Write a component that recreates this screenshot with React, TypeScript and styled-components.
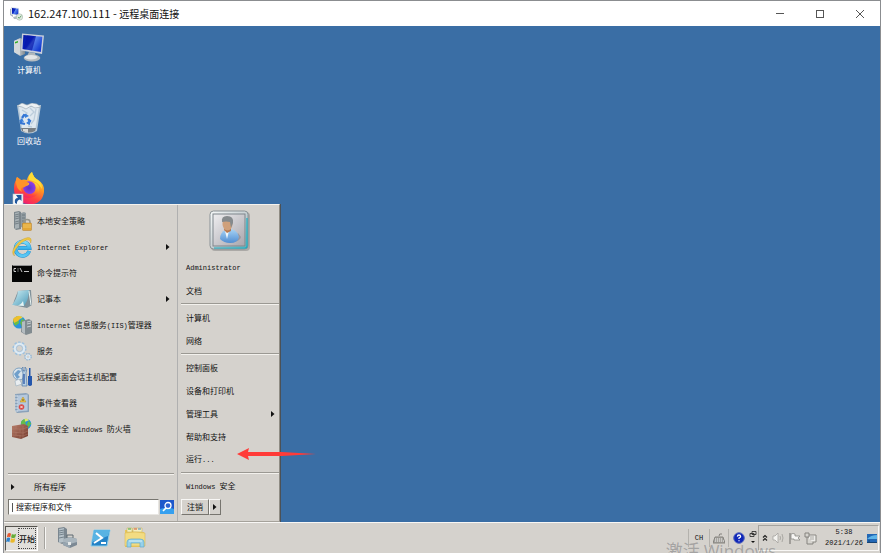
import React from "react";
import styled, { createGlobalStyle } from "styled-components";

const GlobalStyle = createGlobalStyle`
  * { box-sizing: border-box; }
  html, body { margin: 0; padding: 0; background: #fff; }
  button, input { font: inherit; color: inherit; margin: 0; }
  button { background: none; border: 0; padding: 0; text-align: left; }
`;

const face = "#d5d2cd";
const cjk = '"Noto Sans CJK SC", sans-serif';

/* ---------- layout ---------- */

const Page = styled.div`
  min-height: 100vh;
  padding: 0 3px 4px;
  display: flex;
  flex-direction: column;
  font-family: ${cjk};
  font-size: 8px;
  line-height: 12px;
  color: #111;
`;

const RemoteWindow = styled.main`
  position: relative;
  flex: 1;
  display: flex;
  flex-direction: column;
  overflow: hidden;
  border: 1px solid #8b8d90;
  border-bottom: 0;
`;

const TitleBar = styled.header`
  height: 25px;
  flex: none;
  display: flex;
  align-items: center;
  padding-left: 6px;
  background: #fff;
  color: #111;
`;

const Title = styled.h1`
  flex: 1;
  margin: 0 0 0 5px;
  font-size: 10px;
  font-weight: 400;
  line-height: 16px;
`;

const TitleAddress = styled.span`
  font-size: 11px;
`;

const CaptionButton = styled.button`
  width: 40px;
  height: 24px;
  display: flex;
  align-items: center;
  justify-content: center;
`;

const Desktop = styled.section`
  position: relative;
  flex: 1;
  padding-top: 6px;
  background: #3a6ea5;
`;

const DesktopIcons = styled.div`
  display: flex;
  flex-direction: column;
  align-items: flex-start;
`;

const DesktopItem = styled.button`
  width: 50px;
  height: 71px;
  display: flex;
  flex-direction: column;
  align-items: center;
  color: #fff;
`;

const StartMenu = styled.nav`
  position: absolute;
  left: 0;
  bottom: 0;
  width: 276px;
  display: flex;
  background: ${face};
  border: 1px solid #f4f2ee;
  border-left-color: #d5d2cd;
  border-right-color: #8f8c84;
  border-bottom-color: #a5a29b;
  box-shadow: 1px 0 0 #4b5157;
`;

const ProgramPane = styled.div`
  width: 173px;
  display: flex;
  flex-direction: column;
  padding: 3px 3px 6px 3px;
  border-right: 1px solid #b0b0b0;
`;

const ProgramItem = styled.button`
  height: 26px;
  display: flex;
  align-items: center;
  gap: 5px;
  padding: 0 4px 0 4px;
`;

const ItemText = styled.span`
  flex: 1;
  white-space: nowrap;
`;

const Spacer = styled.div`
  flex: 1;
`;

const Separator = styled.hr`
  width: 100%;
  height: 2px;
  margin: 0;
  border: 0;
  border-top: 1px solid #9b9993;
  border-bottom: 1px solid #f3f1ed;
`;

const AllPrograms = styled.button`
  height: 24px;
  display: flex;
  align-items: center;
  gap: 19px;
  padding-left: 3px;
`;

const SearchForm = styled.form`
  display: flex;
  gap: 1px;
`;

const SearchField = styled.label`
  flex: 1;
  display: flex;
  align-items: center;
  gap: 3px;
  height: 16px;
  padding-left: 3px;
  background: #fff;
  border: 1px solid #77756f;
  border-right-color: #e8e6e2;
  border-bottom-color: #e8e6e2;
`;

const Caret = styled.span`
  width: 1px;
  height: 9px;
  background: #555;
`;

const SearchInput = styled.input`
  flex: 1;
  min-width: 0;
  height: 12px;
  padding: 0;
  border: 0;
  outline: 0;
  background: none;
  &::placeholder { color: #111; opacity: 1; }
`;

const SearchButton = styled.button`
  display: flex;
  align-items: center;
`;

const PlacesPane = styled.div`
  flex: 1;
  display: flex;
  flex-direction: column;
  padding: 5px 0 6px 3px;
`;

const Avatar = styled.div`
  display: flex;
  justify-content: center;
  padding-bottom: 4px;
`;

const PlaceItem = styled.button`
  height: 23px;
  display: flex;
  align-items: center;
  padding: 0 4px 0 5px;
`;

const PlaceSeparator = styled(Separator)`
  margin: 1px 0;
`;

const LogoffRow = styled.div`
  display: flex;
  padding-top: 1px;
  margin-top: auto;
`;

const RaisedButton = styled.button<{ $wide?: boolean }>`
  width: ${(p) => (p.$wide ? "28px" : "12px")};
  height: 16px;
  display: flex;
  align-items: center;
  justify-content: center;
  border: 1px solid #f8f7f5;
  border-right-color: #77756f;
  border-bottom-color: #77756f;
`;

const Pointer = styled.svg`
  position: absolute;
  left: 233px;
  bottom: 61px;
`;

const Taskbar = styled.footer`
  height: 31px;
  flex: none;
  display: flex;
  align-items: center;
  background: ${face};
  border-top: 1px solid #f8f7f5;
  padding: 0 1px;
`;

const StartButton = styled.button`
  width: 33px;
  height: 25px;
  display: flex;
  align-items: center;
  border: 1px solid #55534e;
  border-right-color: #fff;
  border-bottom-color: #fff;
  background: #e1dfdb;
  font-weight: 500;
`;

const StartLabel = styled.span`
  flex: 1;
  margin: 1px;
  border: 1px dotted #444;
  line-height: 19px;
  text-align: center;
  white-space: nowrap;
`;

const QuickLaunch = styled.div`
  display: flex;
  gap: 12px;
  margin-left: 6px;
  padding-left: 11px;
  border-left: 1px solid #a5a39e;
  box-shadow: inset 1px 0 0 #f8f7f5;
`;

const LanguageBar = styled.div`
  height: 25px;
  display: flex;
  align-items: center;
  margin-left: auto;
`;

const LanguageButton = styled.button<{ $width: number }>`
  width: ${(p) => p.$width}px;
  height: 18px;
  display: flex;
  align-items: center;
  justify-content: center;
  border-left: 1px solid #b4b2ad;
`;

const BarOptions = styled.button`
  width: 10px;
  display: flex;
  justify-content: center;
`;

const Tray = styled.div`
  height: 26px;
  display: flex;
  align-items: center;
  gap: 3px;
  padding: 0 1px 0 3px;
  border: 1px solid #a5a39e;
  border-right-color: #f8f7f5;
  border-bottom-color: #f8f7f5;
`;

const TrayButton = styled.button`
  display: flex;
`;

const Clock = styled.time`
  width: 40px;
  margin-left: 4px;
  font: 7px/11px "Liberation Mono", monospace;
  text-align: center;
  white-space: nowrap;
`;

const ClockLine = styled.span`
  display: block;
`;

const Latin = styled.span`
  font-family: "Liberation Mono", monospace;
  font-size: 7px;
  white-space: pre;
`;

const Watermark = styled.div`
  position: absolute;
  right: 104px;
  bottom: -9px;
  font: 17px/22px ${cjk};
  color: rgba(110, 110, 115, 0.48);
  white-space: nowrap;
  pointer-events: none;
`;

const WatermarkLatin = styled.span`
  font: 17px/22px "Open Sans", sans-serif;
`;

/* ---------- text and icons ---------- */

function Label({ text }: { text: string }) {
  return (
    <>
      {text.split(/([\x20-\x7e]+)/).filter(Boolean).map((part, i) =>
        /[\x20-\x7e]/.test(part) ? <Latin key={i}>{part}</Latin> : <React.Fragment key={i}>{part}</React.Fragment>
      )}
    </>
  );
}

const ArrowRight = () => (
  <svg width="4" height="6" viewBox="0 0 4 6"><path d="M0 0L3.5 3L0 6Z" fill="#111" /></svg>
);

const Hidden = styled.svg`
  position: absolute;
`;

const Gradients = () => (
  <Hidden width="0" height="0" aria-hidden="true">
    <defs>
      <linearGradient id="screen" x2="1" y2=".6"><stop offset="0" stopColor="#06159b" /><stop offset=".45" stopColor="#0b2bcc" /><stop offset=".55" stopColor="#5a86ec" /><stop offset="1" stopColor="#143bd1" /></linearGradient>
      <linearGradient id="metal"><stop offset="0" stopColor="#f5f7f8" /><stop offset=".5" stopColor="#b8bfc4" /><stop offset="1" stopColor="#7e878e" /></linearGradient>
      <linearGradient id="ie" x2="0" y2="1"><stop offset="0" stopColor="#7ddcfb" /><stop offset=".5" stopColor="#35b0ec" /><stop offset="1" stopColor="#5cc8f4" /></linearGradient>
      <linearGradient id="note" x2="1" y2="1"><stop offset="0" stopColor="#d1f0f5" /><stop offset="1" stopColor="#4c9ab9" /></linearGradient>
      <linearGradient id="fox" x1=".8" y1="0" x2=".3" y2="1"><stop offset="0" stopColor="#fff04b" /><stop offset=".4" stopColor="#ff9b22" /><stop offset=".72" stopColor="#ff443e" /><stop offset="1" stopColor="#ed1878" /></linearGradient>
      <linearGradient id="frame" x2="1" y2="1"><stop offset="0" stopColor="#f7fafa" /><stop offset=".5" stopColor="#c9d1d4" /><stop offset="1" stopColor="#58b9c6" /></linearGradient>
      <linearGradient id="photo" x2="1" y2="1"><stop offset="0" stopColor="#eeeef0" /><stop offset="1" stopColor="#a8a5ac" /></linearGradient>
      <linearGradient id="blue" x2="0" y2="1"><stop offset="0" stopColor="#a8d4f5" /><stop offset="1" stopColor="#508dd2" /></linearGradient>
      <linearGradient id="brick" x2="1" y2="1"><stop offset="0" stopColor="#b77d69" /><stop offset="1" stopColor="#743a2d" /></linearGradient>
      <radialGradient id="violet"><stop offset="0" stopColor="#5a35c8" /><stop offset="1" stopColor="#9440e8" /></radialGradient>
    </defs>
  </Hidden>
);

const RemoteIcon = () => (
  <svg width="13" height="14" viewBox="0 0 13 14">
    <path d="M0 2L3 1V10L0 8Z" fill="#aeb7c0" />
    <path d="M1 0L9 1V9L1 7.5Z" fill="#dde3ea" /><path d="M2 1L8.3 1.8V8L2 6.8Z" fill="url(#screen)" />
    <path d="M3 10L7 9L8 12L4 12Z" fill="#aeb8c0" />
    <circle cx="9.5" cy="10" r="3.2" fill="#dde8de" stroke="#a9b8ac" strokeWidth=".6" />
    <path d="M8 10L9.2 11.3L11.3 8.7" fill="none" stroke="#67a36d" />
  </svg>
);

const ComputerIcon = () => (
  <svg width="32" height="32" viewBox="0 0 32 32">
    <path d="M1 9L7 6L12 8V22L7 24L1 20Z" fill="url(#metal)" />
    <path d="M1 9L7 7V23L1 20Z" fill="#d4d8da" /><path d="M2 10L5 9V10.5L2 11.5Z" fill="#32af25" />
    <path d="M16 20L22 21L23 25L14 24Z" fill="#aeb5ba" />
    <ellipse cx="19" cy="26" rx="8.3" ry="3.5" fill="#b6bcc0" /><ellipse cx="18" cy="25.3" rx="6.5" ry="2.2" fill="#e3e5e7" />
    <path d="M9 1.5L31 3.5L29 22L8 18.5Z" fill="#c9cedb" />
    <path d="M10.4 3L29.4 4.8L27.8 20L9.5 17Z" fill="url(#screen)" />
    <path d="M14 3.5L23 4.2L19 18.5L10 17Z" fill="#0712a3" opacity=".65" />
  </svg>
);

const RecycleIcon = () => (
  <svg width="32" height="32" viewBox="0 0 32 32">
    <path d="M4 2L28 2L24 28Q16 33 8 28Z" fill="#b6c8d7" />
    <path d="M6 4L26 4L22.5 25L9 25Z" fill="#dfe8ef" />
    <path d="M8 25L23 25L22 28Q16 31 9 28Z" fill="#787e83" />
    <path d="M10 26H15V30L10 28Z" fill="#d9dad7" />
    <path d="M4 3L9 0L14 2L19 0L24 1L28 4L22 5L18 3L13 6L9 4Z" fill="#edf1f3" stroke="#93a3af" strokeWidth=".6" />
    <path d="M9 7L14 10L12 14M17 5L21 9L17 13M23 6L21 17L18 21M15 23L19 24" fill="none" stroke="#bccddb" strokeWidth="1.3" />
    <path d="M9 15L11 12L14 13M15 16L17 18L15 21M12 21L8 20L8 17" fill="none" stroke="#3475d4" strokeWidth="2.3" />
    <path d="M12 10.5L16 13L12 15ZM17 17V22L13 20ZM6 18L9 15L11 19Z" fill="#397fda" />
  </svg>
);

const FirefoxIcon = () => (
  <svg width="32" height="32" viewBox="0 0 32 32" overflow="visible">
    <path d="M19-2Q20 3 25 6Q32 10 31 18C30 27 23 31 16 30C7 30 1 24 1 15Q1 9 3 6L4 3L8 6Q11 5 14 6Q15 1 19-2Z" fill="url(#fox)" />
    <circle cx="16" cy="14" r="6.7" fill="url(#violet)" />
    <path d="M3 7Q8 6 12 9L16 9Q17 11 13 12L10 14Q11 19 16 20Q22 20 23 14Q23 10 20 8Q28 10 26 19Q20 26 11 23Q4 19 3 7Z" fill="url(#fox)" />
    <path d="M3 5L4 3L8 6Q12 6 16 9Q14 12 10 13Q7 14 9 18Q3 16 3 5Z" fill="#ff932a" />
    <path d="M19-2Q20 3 25 6Q29 9 29 15Q25 7 16 6Q15 1 19-2Z" fill="#ffdc35" />
    <rect y="20" width="10" height="11" fill="#f6f8fa" stroke="#bcbec2" strokeWidth=".6" />
    <path d="M2 29Q1 24 5 24L3 21H8.5V27L7 25.5Q3.5 26 4 30Z" fill="#21579d" />
  </svg>
);

const Server = () => (
  <>
    <path d="M2 1L7 0L9 1V18L4 19L2 17Z" fill="#7c868c" /><path d="M3 2L7 1V17L3 18Z" fill="#a7b0b4" />
    <path d="M3 4L7 3M3 6L7 5M3 8L7 7M3 11L7 10M3 13L7 12" stroke="#68747a" strokeWidth=".8" />
    <path d="M9 2L12 1L14 2V18L9 16Z" fill="#929ca1" /><path d="M10 4H13M10 7H13M10 10H13M10 13H13" stroke="#667177" strokeWidth=".8" />
  </>
);

const Globe = () => (
  <>
    <circle cx="8" cy="8" r="7" fill="#2994dc" /><path d="M2 4Q6 0 10 2L7 5L8 9L4 12Q0 8 2 4ZM11 4L15 7L11 13L9 9Z" fill="#66bd49" />
    <path d="M6 1Q10 0 12 3L7 5Z" fill="#e2e56c" />
  </>
);

const menuArt: Record<string, React.ReactNode> = {
  policy: <><Server /><path d="M12 13V11Q12 8.5 15 8.5T18 11V13" fill="none" stroke="#95958c" strokeWidth="1.5" /><rect x="10.5" y="12" width="9" height="7.5" rx=".7" fill="#e3a635" stroke="#b58130" strokeWidth=".5" /><path d="M11 14H19M11 16H19" stroke="#f5d275" strokeWidth=".7" /></>,
  ie: <><path d="M17.2 14A7 7 0 1 1 17.5 11H6" fill="none" stroke="#238cc9" strokeWidth="3.8" /><path d="M17.2 14A7 7 0 1 1 17.5 11H6" fill="none" stroke="url(#ie)" strokeWidth="3" /><path d="M2.5 19Q-1.5 16 3 9.5Q9 1.5 15.8.6Q20.5.4 18.7 6Q18.3 2.1 14.4 3Q8.8 4.8 4 11.8Q.9 16.4 2.5 19Z" fill="#f0c740" stroke="#c69d32" strokeWidth=".4" /></>,
  cmd: <><rect y="2" width="20" height="17" fill="#050505" /><path d="M.5 2.5H19.5" stroke="#929292" /><path d="M4 5.5H2V8.5H4M6 5.5V6.5M6 7.5V8.5M8 5L10 9M12 8.5H17" fill="none" stroke="#ddd" strokeWidth=".9" /></>,
  note: <><path d="M6 2L19 1L20 16L15 19L1 16L2 12Z" fill="#80919a" /><path d="M6 2L17 1Q17 10 12 17L0 16Q5 10 6 2Z" fill="url(#note)" /><path d="M17 2L19 16" fill="none" stroke="#e8f4f3" /><path d="M0 16Q8 18 11 12L12 17Z" fill="#e6f4f4" /></>,
  iis: <><g transform="scale(.9)"><Globe /></g><path d="M1 4Q5-1 10 2L6 6L2 8Z" fill="#eebf2c" /><path d="M10 6L17 4L20 6V18L14 20L9 17Z" fill="#818b90" /><path d="M10 7L13 6V19L10 17Z" fill="#b5bdc1" /><path d="M15 7L19 6M15 9L19 8M15 12L19 11" stroke="#c7cdd0" /></>,
  services: <><circle cx="7.5" cy="7.5" r="5.9" fill="none" stroke="#9cc0df" strokeWidth="2.4" strokeDasharray="2.2 1.5" /><circle cx="7.5" cy="7.5" r="4.5" fill={face} stroke="#dceaf5" strokeWidth="2.4" /><circle cx="7.5" cy="7.5" r="3.2" fill="none" stroke="#8fb5d6" strokeWidth=".6" /><circle cx="16" cy="15.8" r="2.8" fill={face} stroke="#8eb2d2" strokeWidth="2" strokeDasharray="1.4 .8" /><circle cx="16" cy="15.8" r="2" fill="none" stroke="#dceaf5" strokeWidth="1.2" /></>,
  session: <><circle cx="7" cy="7" r="6" fill="#d9e3eb" stroke="#6b94ba" strokeWidth=".8" /><path d="M2 7L6 3L9 4L6 8L8 10L5 12Z" fill="#6f9fcb" /><path d="M3 14L7 12L10 17L4 19Z" fill="#e9edf0" stroke="#8ca5b9" strokeWidth=".5" /><path d="M10 4Q9 1 11 0V4H13V0Q16 2 14 6L15 19H10L11 6Z" fill="#b7cfe4" stroke="#416d9e" strokeWidth=".6" /><path d="M17 1H18.5V9H20V18Q18 20 16 18V9H17Z" fill="#2456ac" /><path d="M12 7V17" stroke="#2a58a6" strokeWidth="1.3" /></>,
  event: <><path d="M3 1L14 0L17 2V19L5 20L3 18Z" fill="#8ca4bc" /><path d="M5 2L16 1V18L5 19Z" fill="#b5c8dd" stroke="#7d93ac" strokeWidth=".6" /><path d="M3 3H6M3 6H6M3 9H6M3 12H6M3 15H6M3 18H6" stroke="#e9f0f6" strokeWidth=".8" /><path d="M11 4L14 9H8Z" fill="#f1c63f" stroke="#ad8a2f" strokeWidth=".5" /><path d="M11 6V8" stroke="#403c2b" strokeWidth=".8" /><circle cx="9.5" cy="14" r="2.8" fill="#d84946" /><path d="M8.3 12.8L10.7 15.2M10.7 12.8L8.3 15.2" stroke="#fff" strokeWidth=".8" /></>,
  firewall: <><g transform="translate(8 -1) scale(.75)"><Globe /></g><path d="M0 7L12 5L16 7V17L9 20L0 18Z" fill="url(#brick)" /><path d="M0 10L11 10L16 8M0 13L11 14L16 12M0 16L11 17L16 15M4 7V10M8 10V13M4 13V16M11 7V19M8 16V20" stroke="#b98774" strokeWidth=".4" fill="none" /></>,
};

const MenuIcon = ({ name }: { name: string }) => (
  <svg width="20" height="20" viewBox="0 0 20 20" overflow="visible" aria-hidden="true">{menuArt[name]}</svg>
);

const UserPicture = () => (
  <svg width="42" height="42" viewBox="0 0 42 42">
    <rect x="2" y="2" width="39" height="39" rx="4" fill="#777" opacity=".45" />
    <rect x="1" y="1" width="38" height="38" rx="3.5" fill="url(#frame)" stroke="#8a9296" />
    <path d="M38 8V36Q38 38 36 38H5" fill="none" stroke="#20a9bd" strokeWidth="1.2" />
    <rect x="4" y="4" width="32" height="32" fill="url(#photo)" stroke="#7e858b" />
    <path d="M22 32Q31 32 32 27L29 23Z" fill="#77747b" opacity=".45" />
    <path d="M11 29Q11 22 17 20L22 19Q29 21 30 27Q29 33 21 33Q15 33 11 29Z" fill="url(#blue)" />
    <path d="M16 21L18 29L20 21Z" fill="#f0f6fa" /><path d="M16 16H22V21L18 23L15 20Z" fill="#b8794f" />
    <ellipse cx="18.5" cy="14" rx="5" ry="6.5" fill="#cfa07b" />
    <path d="M13 12Q12 6 18 6Q25 6 24 13L22 18L21 12Q17 11 13 12Z" fill="#858a8d" />
  </svg>
);

const Flag = () => (
  <svg width="13" height="14" viewBox="0 0 13 14">
    <path d="M2 2Q4 0 6 2L5 6Q3 5 1 6Z" fill="#e65a30" /><path d="M7 2Q9 4 12 2L11 6Q8 8 6 6Z" fill="#66ad37" />
    <path d="M1 7Q3 6 5 7L4 12Q2 10 0 12Z" fill="#2e82cd" /><path d="M6 7Q8 9 11 7L10 12Q7 13 5 12Z" fill="#e9b92c" />
  </svg>
);

const ServerManager = () => (
  <svg width="22" height="22" viewBox="0 0 22 22">
    <path d="M2 1L8 0L11 2V15L6 17L2 15Z" fill="#7b8790" /><path d="M3 2L8 1V15L3 16Z" fill="#b5c1c8" />
    <path d="M3 4L8 3M3 6L8 5M3 8L8 7M3 11L8 10" stroke="#65737d" strokeWidth=".8" />
    <path d="M7 12L14 10L21 12V18L14 21L7 18Z" fill="#7c8994" /><path d="M7 12L14 10L21 12V15L14 17L7 15Z" fill="#a9b5bd" />
    <path d="M7 15L14 17V21L7 18Z" fill="#96a4af" /><path d="M11 11V8H17V11" fill="none" stroke="#5d6871" />
    <path d="M12 15H15V18H12Z" fill="#e5e8e8" />
  </svg>
);

const PowerShell = () => (
  <svg width="22" height="22" viewBox="0 0 22 22">
    <path d="M4 3H20L17 19H1Z" fill="#2483c7" stroke="#8dcde9" /><path d="M4 3H20L18 9L2 15Z" fill="#58b3e3" />
    <path d="M6 6L12 11L4 16M11 16H16" fill="none" stroke="#fff" strokeWidth="2" />
  </svg>
);

const Explorer = () => (
  <svg width="22" height="22" viewBox="0 0 22 22">
    <path d="M1 3H8L10 5H20V20H1Z" fill="#e9c757" /><path d="M3 1H8V5H3ZM9 1H18V5H9Z" fill="#f5efbc" stroke="#c3aa54" strokeWidth=".5" />
    <path d="M4 2H7" stroke="#37a44e" /><path d="M10 2H13" stroke="#d05442" /><path d="M14 2H17" stroke="#4a8acc" />
    <path d="M1 6Q11 4 21 6V19H1Z" fill="#f2dc82" stroke="#dab957" strokeWidth=".6" />
    <path d="M3 20V15Q3 12 7 12H16Q20 12 20 15V20H16V16H7V20Z" fill="#96d1ea" stroke="#64abc9" strokeWidth=".7" />
    <path d="M5 14H18" stroke="#d9f1f5" />
  </svg>
);

const CaptionIcon = ({ kind }: { kind: "min" | "max" | "close" }) => (
  <svg width="10" height="10" viewBox="0 0 10 10" fill="none" stroke="#555" strokeWidth="1">
    {kind === "min" && <path d="M1 4.5H9" />}
    {kind === "max" && <rect x="1.5" y="1.5" width="7" height="7" />}
    {kind === "close" && <path d="M1 1L9 9M9 1L1 9" />}
  </svg>
);

/* ---------- content ---------- */

const programs = [
  { icon: "policy", text: "本地安全策略" },
  { icon: "ie", text: "Internet Explorer", sub: true },
  { icon: "cmd", text: "命令提示符" },
  { icon: "note", text: "记事本", sub: true },
  { icon: "iis", text: "Internet 信息服务(IIS)管理器" },
  { icon: "services", text: "服务" },
  { icon: "session", text: "远程桌面会话主机配置" },
  { icon: "event", text: "事件查看器" },
  { icon: "firewall", text: "高级安全 Windows 防火墙" },
];

const places = [
  ["Administrator", "文档"],
  ["计算机", "网络"],
  ["控制面板", "设备和打印机", "管理工具", "帮助和支持", "运行..."],
  ["Windows 安全"],
];

export default function App() {
  return (
    <Page lang="zh-CN">
      <GlobalStyle />
      <Gradients />
      <RemoteWindow>
        <TitleBar>
          <RemoteIcon />
          <Title><TitleAddress>162.247.100.111 - </TitleAddress>远程桌面连接</Title>
          <CaptionButton aria-label="最小化"><CaptionIcon kind="min" /></CaptionButton>
          <CaptionButton aria-label="最大化"><CaptionIcon kind="max" /></CaptionButton>
          <CaptionButton aria-label="关闭"><CaptionIcon kind="close" /></CaptionButton>
        </TitleBar>

        <Desktop>
          <DesktopIcons>
            <DesktopItem><ComputerIcon />计算机</DesktopItem>
            <DesktopItem><RecycleIcon />回收站</DesktopItem>
            <DesktopItem aria-label="Firefox"><FirefoxIcon /></DesktopItem>
          </DesktopIcons>

          <StartMenu>
            <ProgramPane>
              {programs.map((p) => (
                <ProgramItem key={p.icon}>
                  <MenuIcon name={p.icon} />
                  <ItemText><Label text={p.text} /></ItemText>
                  {p.sub && <ArrowRight />}
                </ProgramItem>
              ))}
              <Spacer />
              <Separator />
              <AllPrograms><ArrowRight />所有程序</AllPrograms>
              <SearchForm>
                <SearchField>
                  <Caret />
                  <SearchInput aria-label="搜索程序和文件" placeholder="搜索程序和文件" />
                </SearchField>
                <SearchButton type="button" aria-label="搜索">
                  <svg width="14" height="14" viewBox="0 0 14 14">
                    <rect width="14" height="14" fill="#1d58cb" /><path d="M0 9Q8 6 14 9V14H0Z" fill="#36a0ef" />
                    <circle cx="8" cy="5.5" r="3" fill="#2b62d2" stroke="#fff" strokeWidth="1.3" /><path d="M6 8L3 11" stroke="#fff" strokeWidth="1.6" />
                  </svg>
                </SearchButton>
              </SearchForm>
            </ProgramPane>

            <PlacesPane>
              <Avatar><UserPicture /></Avatar>
              {places.map((group, i) => (
                <React.Fragment key={i}>
                  {i > 0 && <PlaceSeparator />}
                  {group.map((name) => (
                    <PlaceItem key={name}>
                      <ItemText><Label text={name} /></ItemText>
                      {name === "管理工具" && <ArrowRight />}
                    </PlaceItem>
                  ))}
                </React.Fragment>
              ))}
              <LogoffRow>
                <RaisedButton $wide>注销</RaisedButton>
                <RaisedButton aria-label="更多选项"><ArrowRight /></RaisedButton>
              </LogoffRow>
            </PlacesPane>
          </StartMenu>

          <Pointer width="80" height="14" viewBox="0 0 80 14" aria-hidden="true">
            <path d="M0 7L12 1L11 5L45 5L79 7L45 9L11 9L12 13Z" fill="#ff3b38" />
          </Pointer>
        </Desktop>

        <Taskbar>
          <StartButton><Flag /><StartLabel>开始</StartLabel></StartButton>
          <QuickLaunch>
            <TrayButton aria-label="服务器管理器"><ServerManager /></TrayButton>
            <TrayButton aria-label="PowerShell"><PowerShell /></TrayButton>
            <TrayButton aria-label="资源管理器"><Explorer /></TrayButton>
          </QuickLaunch>
          <LanguageBar>
            <LanguageButton $width={21}><Latin>CH</Latin></LanguageButton>
            <LanguageButton $width={19} aria-label="键盘">
              <svg width="12" height="11" viewBox="0 0 12 11"><path d="M6 3Q6 0 9 1" fill="none" stroke="#85837f" /><path d="M2 4H10L12 10H0Z" fill="#a6a49f" stroke="#85837f" /><path d="M2 6H10M2 8H11" stroke="#eee" strokeDasharray="1 1" /></svg>
            </LanguageButton>
            <LanguageButton $width={20} aria-label="帮助">
              <svg width="12" height="12" viewBox="0 0 12 12"><circle cx="6" cy="6" r="5.3" fill="#1027b8" stroke="#5566bd" /><path d="M4.4 4.6Q4.5 3 6 3T7.6 4.5Q7.6 5.4 6 6V7M6 8.2V9.2" fill="none" stroke="#fff" strokeWidth="1.3" /></svg>
            </LanguageButton>
            <BarOptions aria-label="语言栏选项">
              <svg width="8" height="14" viewBox="0 0 8 14"><path d="M3 .5H7V3.5H3ZM1 2.5H5V5.5H1Z" fill={face} stroke="#222" strokeWidth=".8" /><path d="M2 10H6L4 12Z" fill="#111" /></svg>
            </BarOptions>
          </LanguageBar>
          <Tray>
            <TrayButton aria-label="显示隐藏的图标">
              <svg width="6" height="8" viewBox="0 0 6 8"><path d="M1 3.5L3 1.5L5 3.5M1 6.5L3 4.5L5 6.5" fill="none" stroke="#222" strokeWidth="1.2" /></svg>
            </TrayButton>
            <TrayButton aria-label="音量">
              <svg width="14" height="12" viewBox="0 0 14 12"><path d="M2 4H4L7 1V11L4 8H2Z" fill="#f4f3f0" stroke="#a4a29e" strokeWidth=".8" /><path d="M9 4Q10 6 9 8M11 2Q13 6 11 10" fill="none" stroke="#aaa8a3" /></svg>
            </TrayButton>
            <TrayButton aria-label="操作中心">
              <svg width="13" height="13" viewBox="0 0 13 13"><path d="M2 1V12" stroke="#85837f" strokeWidth="1.3" /><path d="M3 2Q5 1 7 2V4H12L10 6L12 8H6V7H3Z" fill="#f7f6f4" stroke="#8c8a86" strokeWidth=".8" /></svg>
            </TrayButton>
            <TrayButton aria-label="网络">
              <svg width="13" height="13" viewBox="0 0 13 13"><path d="M4 3H12V10H4Z" fill="#eeedea" stroke="#888681" /><path d="M1 1H5V5H1ZM3 5V12H9V10" fill="#d6d4cf" stroke="#85837f" /><path d="M6 5H10M6 7H10" stroke="#aaa8a3" /></svg>
            </TrayButton>
            <Clock dateTime="2021-01-26T05:38"><ClockLine>5:38</ClockLine><ClockLine>2021/1/26</ClockLine></Clock>
            <TrayButton aria-label="显示桌面">
              <svg width="10" height="9" viewBox="0 0 10 9"><rect width="10" height="8" fill="#2368b5" /><path d="M0 5Q4 1 10 1V5Z" fill="#5eb4e8" /><path d="M0 8.5H10M1 7H3" stroke="#174474" /></svg>
            </TrayButton>
          </Tray>
        </Taskbar>
        <Watermark>激活 <WatermarkLatin>Windows</WatermarkLatin></Watermark>
      </RemoteWindow>
    </Page>
  );
}
